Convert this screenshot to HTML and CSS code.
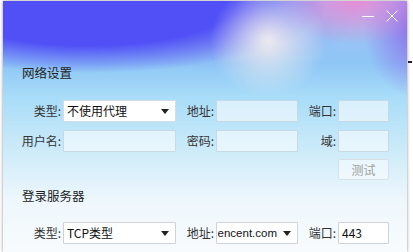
FILE: index.html
```html
<!DOCTYPE html>
<html lang="zh-CN">
<head>
    <meta charset="UTF-8">
    <title>网络设置</title>
    <link rel="stylesheet" href="styles.css">
</head>
<body>

<div class="backdrop-dash"></div>

<div class="window">
    <div class="titlebar">
        <span class="tb-btn">
            <svg width="12" height="12" viewBox="0 0 12 12"><line x1="0" y1="6.5" x2="12" y2="6.5" stroke="#fff" stroke-width="1"/></svg>
        </span>
        <span class="tb-btn">
            <svg width="12" height="12" viewBox="0 0 12 12"><path d="M0.5 0.5 L11.5 11.5 M11.5 0.5 L0.5 11.5" stroke="#fff" stroke-width="1" fill="none"/></svg>
        </span>
    </div>

    <section class="group">
        <h2 class="group-title">网络设置</h2>
        <div class="form-grid">
            <label>类型:</label>
            <div class="select"><span class="select-text">不使用代理</span><span class="caret"></span></div>
            <label>地址:</label>
            <div class="field"></div>
            <label>端口:</label>
            <div class="field"></div>

            <label>用户名:</label>
            <div class="field"></div>
            <label>密码:</label>
            <div class="field"></div>
            <label>域:</label>
            <div class="field"></div>

            <button class="btn-test">测试</button>
        </div>
    </section>

    <section class="group group-server">
        <h2 class="group-title">登录服务器</h2>
        <div class="form-grid">
            <label>类型:</label>
            <div class="select solid"><span class="select-text">TCP类型</span><span class="caret"></span></div>
            <label>地址:</label>
            <div class="select solid"><span class="select-text clip"><span>tcpconn.tencent.com</span></span><span class="caret"></span></div>
            <label>端口:</label>
            <div class="field solid">443</div>
        </div>
    </section>
</div>

</body>
</html>
```

FILE: styles.css
```css
html, body {
    margin: 0;
    padding: 0;
    height: 100%;
    overflow: hidden;
}
body {
    background-color: #fff;
    font-family: "Noto Sans CJK SC", "Microsoft YaHei", sans-serif;
    font-size: 12px;
    color: #333;
    padding: 1px 0 0 3px;
    box-sizing: border-box;
}
.backdrop-dash {
    position: absolute;
    left: 408px;
    top: 61px;
    width: 4px;
    height: 2px;
    background-color: #222;
}
.window {
    position: relative;
    width: 404px;
    height: 251px;
    box-shadow: 0 0 3px rgba(0, 0, 0, 0.45);
    background:
        radial-gradient(ellipse 58px 56px at 265px 40px, rgba(240, 236, 238, 0.97), rgba(240, 236, 238, 0) 100%),
        radial-gradient(ellipse 78px 44px at 352px 0px, rgba(234, 138, 212, 0.95), rgba(234, 138, 212, 0) 100%),
        radial-gradient(ellipse 52px 75px at 412px 22px, rgba(138, 100, 234, 0.95), rgba(138, 100, 234, 0) 100%),
        radial-gradient(ellipse 240px 72px at 85px 0px, rgba(80, 80, 246, 1) 62%, rgba(80, 80, 246, 0) 100%),
        radial-gradient(ellipse 150px 60px at 210px 10px, rgba(140, 140, 240, 0.8), rgba(140, 140, 240, 0) 100%),
        linear-gradient(to bottom, #a6bff2 0px, #8ec6f6 62px, #a8dcf8 95px, #cdebf9 150px, #eef7fc 200px, #f8fbfd 250px);
}
.titlebar {
    height: 62px;
    display: flex;
    justify-content: flex-end;
    align-items: flex-start;
    gap: 12px;
    padding: 9px 9px 0 0;
    box-sizing: border-box;
}
.tb-btn {
    display: block;
    width: 12px;
    height: 12px;
}
.tb-btn svg {
    display: block;
}
.group {
    padding-left: 17px;
}
.group-title {
    margin: 0 0 0 2px;
    font-size: 12.5px;
    font-weight: normal;
    line-height: 20px;
    color: #222;
}
.form-grid {
    margin-top: 17px;
    display: grid;
    grid-template-columns: 43px 113px 40px 82px 40px 51px;
    grid-auto-rows: 22px;
    row-gap: 8px;
}
.form-grid label {
    text-align: right;
    padding-right: 2px;
    line-height: 22px;
    color: #333;
}
.field, .select {
    box-sizing: border-box;
    height: 22px;
    border: 1px solid rgba(190, 210, 222, 0.8);
    background-color: rgba(255, 255, 255, 0.55);
    border-radius: 1px;
    line-height: 20px;
    padding-left: 3px;
    color: #111;
}
.select {
    display: flex;
    align-items: center;
    background-color: #fff;
    border-color: #d6dde2;
    padding-right: 6px;
}
.select-text {
    flex: 1;
    white-space: nowrap;
}
.select-text.clip {
    display: flex;
    justify-content: flex-end;
    overflow: hidden;
    margin-left: -2px;
    margin-right: 6px;
    font-family: "Liberation Sans", "Noto Sans CJK SC", sans-serif;
    font-size: 11.5px;
}
.caret {
    width: 0;
    height: 0;
    border-left: 4px solid transparent;
    border-right: 4px solid transparent;
    border-top: 5px solid #222;
}
.solid {
    background-color: #fff;
    border-color: #cdd3d8;
}
.btn-test {
    grid-column: 6;
    height: 21px;
    margin-top: -1px;
    border: 1px solid #d8e0e6;
    border-radius: 2px;
    background-color: rgba(255, 255, 255, 0.5);
    color: #a0a0a0;
    font-family: inherit;
    font-size: 12px;
    padding: 0;
}
.group-server .group-title {
    margin-top: 4px;
}
.group-server .form-grid {
    margin-top: 16px;
}
```
